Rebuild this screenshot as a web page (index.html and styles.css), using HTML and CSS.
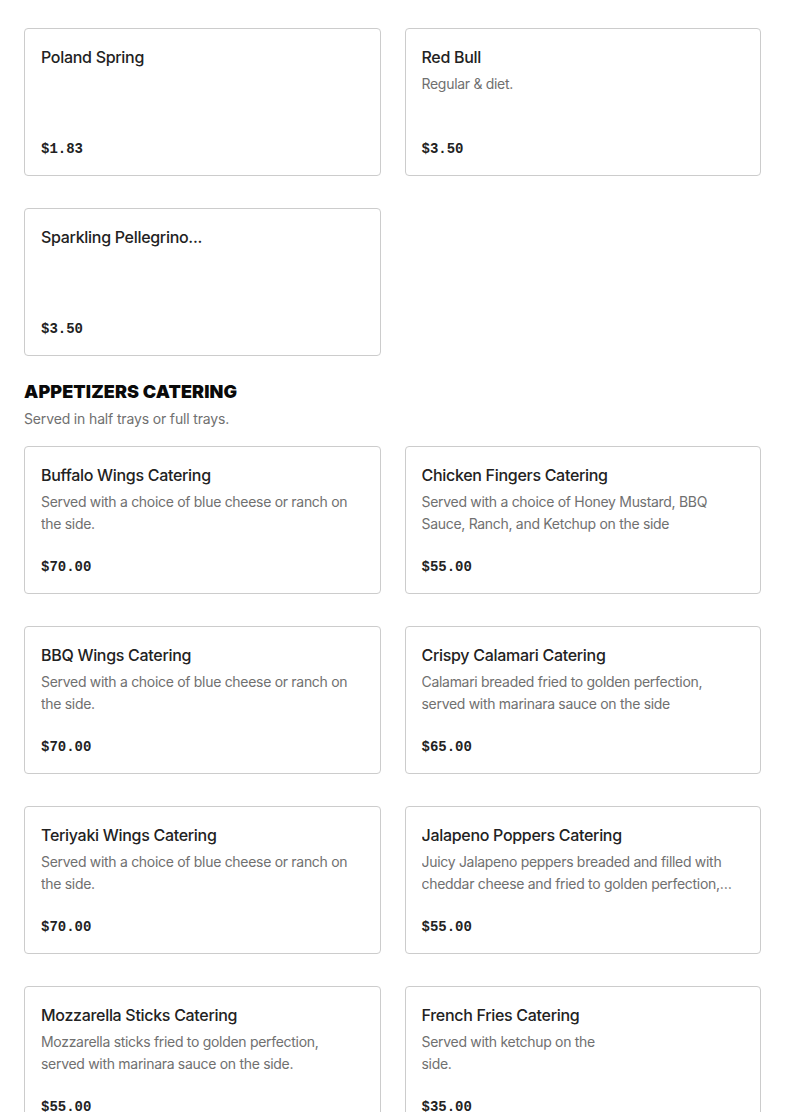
FILE: index.html
```html
<!DOCTYPE html>
<html>
<head>
<meta charset="utf-8">
<link rel="stylesheet" href="styles.css">
</head>
<body>
<main class="menu">
  <section class="section">
    <div class="grid">
      <div class="card">
        <div class="card-title">Poland Spring</div>
        <div class="card-desc"></div>
        <div class="card-price">$1.83</div>
      </div>
      <div class="card">
        <div class="card-title">Red Bull</div>
        <div class="card-desc">Regular &amp; diet.</div>
        <div class="card-price">$3.50</div>
      </div>
      <div class="card">
        <div class="card-title">Sparkling Pellegrino...</div>
        <div class="card-desc"></div>
        <div class="card-price">$3.50</div>
      </div>
    </div>
  </section>
  <section class="section">
    <h2 class="section-title">APPETIZERS CATERING</h2>
    <p class="section-sub">Served in half trays or full trays.</p>
    <div class="grid">
      <div class="card">
        <div class="card-title">Buffalo Wings Catering</div>
        <div class="card-desc">Served with a choice of blue cheese or ranch on the side.</div>
        <div class="card-price">$70.00</div>
      </div>
      <div class="card">
        <div class="card-title">Chicken Fingers Catering</div>
        <div class="card-desc">Served with a choice of Honey Mustard, BBQ Sauce, Ranch, and Ketchup on the side</div>
        <div class="card-price">$55.00</div>
      </div>
      <div class="card">
        <div class="card-title">BBQ Wings Catering</div>
        <div class="card-desc">Served with a choice of blue cheese or ranch on the side.</div>
        <div class="card-price">$70.00</div>
      </div>
      <div class="card">
        <div class="card-title">Crispy Calamari Catering</div>
        <div class="card-desc">Calamari breaded fried to golden perfection, served with marinara sauce on the side</div>
        <div class="card-price">$65.00</div>
      </div>
      <div class="card">
        <div class="card-title">Teriyaki Wings Catering</div>
        <div class="card-desc">Served with a choice of blue cheese or ranch on the side.</div>
        <div class="card-price">$70.00</div>
      </div>
      <div class="card">
        <div class="card-title">Jalapeno Poppers Catering</div>
        <div class="card-desc">Juicy Jalapeno peppers breaded and filled with cheddar cheese and fried to golden perfection, served with marinara sauce on the side.</div>
        <div class="card-price">$55.00</div>
      </div>
      <div class="card">
        <div class="card-title">Mozzarella Sticks Catering</div>
        <div class="card-desc">Mozzarella sticks fried to golden perfection, served with marinara sauce on the side.</div>
        <div class="card-price">$55.00</div>
      </div>
      <div class="card">
        <div class="card-title">French Fries Catering</div>
        <div class="card-desc">Served with ketchup on the<br>side.</div>
        <div class="card-price">$35.00</div>
      </div>
    </div>
  </section>
</main>
</body>
</html>
```
FILE: styles.css
```css
html, body {
  margin: 0;
  padding: 0;
  background: #ffffff;
}
body {
  font-family: "Inter", "Liberation Sans", sans-serif;
  color: #242424;
}
.menu {
  padding: 28px 24px 0 24px;
}
.section + .section {
  margin-top: 24px;
}
.grid {
  display: grid;
  grid-template-columns: 1fr 1fr;
  column-gap: 24px;
  row-gap: 32px;
}
.card {
  border: 1px solid #cccccc;
  border-radius: 4px;
  padding: 16px;
  height: 148px;
  box-sizing: border-box;
  display: flex;
  flex-direction: column;
}
.card-title {
  font-size: 16px;
  line-height: 24px;
  font-weight: 500;
  letter-spacing: -0.3px;
  color: #222222;
  white-space: nowrap;
  overflow: hidden;
  text-overflow: ellipsis;
}
.card-desc {
  margin-top: 4px;
  font-size: 14px;
  line-height: 22px;
  letter-spacing: -0.3px;
  height: 44px;
  color: #707070;
  display: -webkit-box;
  -webkit-line-clamp: 2;
  -webkit-box-orient: vertical;
  overflow: hidden;
  padding-right: 4px;
}
.card-price {
  margin-top: 22px;
  font-family: "Liberation Mono", "DejaVu Sans Mono", monospace;
  font-weight: 700;
  font-size: 14px;
  line-height: 20px;
  color: #222222;
}
.section-title {
  margin: 0;
  font-family: "Inter", "Liberation Sans", sans-serif;
  font-weight: 900;
  font-size: 18px;
  line-height: 24px;
  color: #0a0a0a;
  letter-spacing: 0.1px;
}
.section-sub {
  margin: 4px 0 16px 0;
  font-size: 14px;
  line-height: 22px;
  letter-spacing: -0.15px;
  color: #707070;
}
```
